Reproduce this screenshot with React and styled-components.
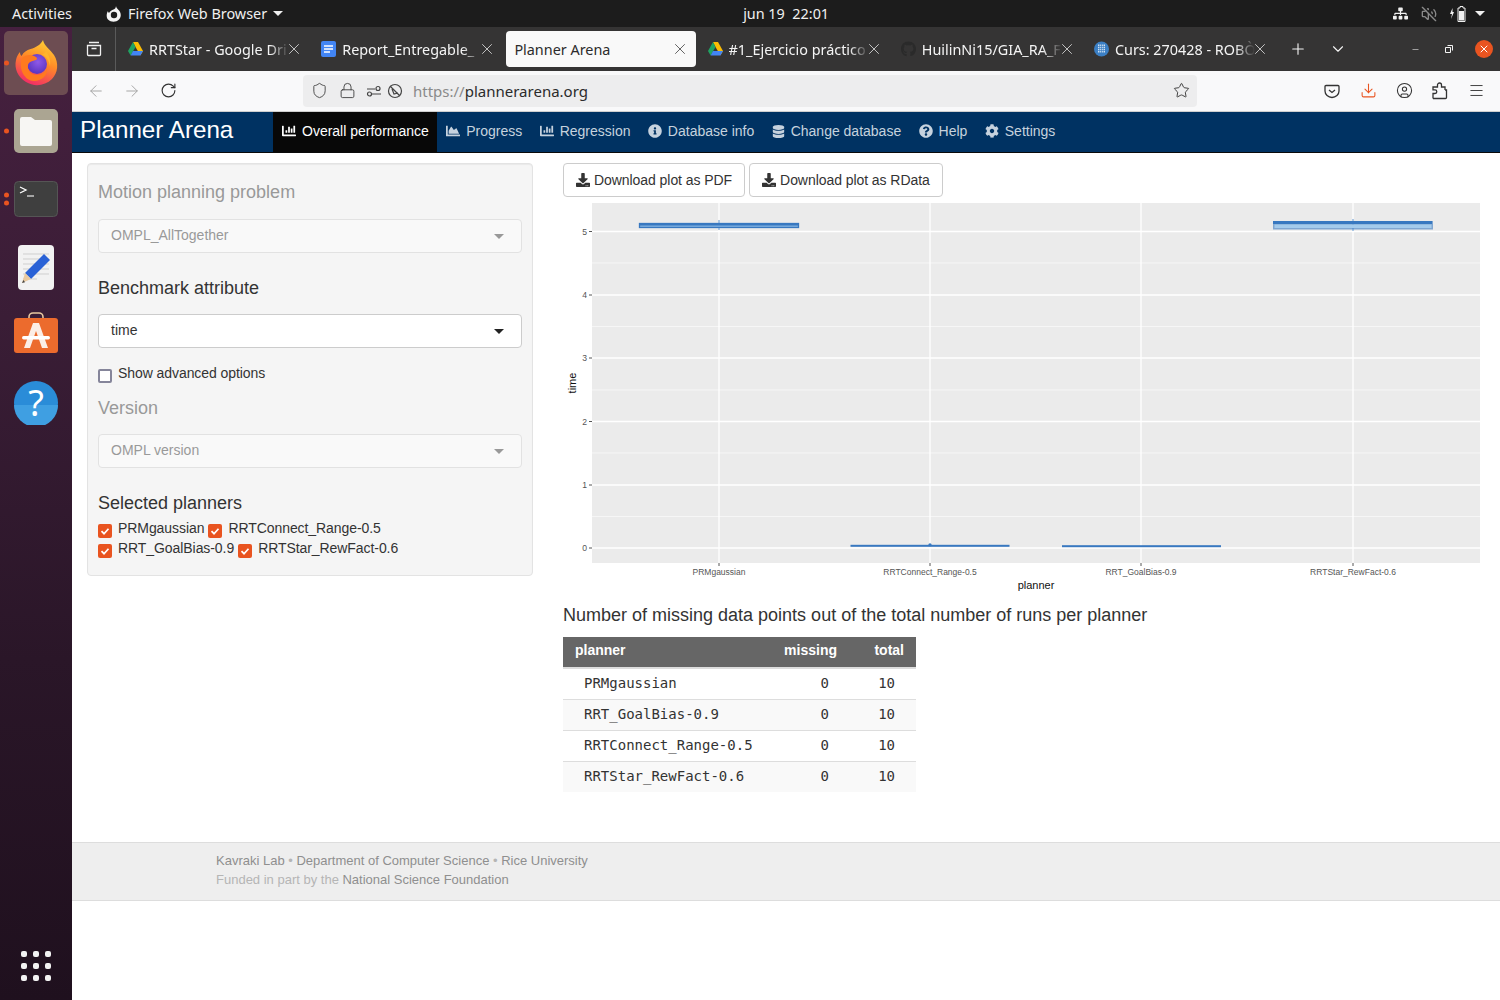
import styled, { createGlobalStyle } from "styled-components"
import {
  ArrowLeft, ArrowRight, RotateCw, Shield, Lock, Star, Download, Menu,
  Plus, ChevronDown, X, Minus, CircleUser, VolumeOff,
} from "lucide-react"
import {
  FaChartBar, FaChartArea, FaInfoCircle, FaDatabase, FaQuestionCircle, FaCog,
  FaDownload, FaGithub, FaSitemap,
} from "react-icons/fa"

const GlobalStyle = createGlobalStyle`
  html, body { margin: 0; padding: 0; background: #fff; }
  body { font-family: "Liberation Sans", Arial, sans-serif; font-size: 14px; color: #333; }
  * { box-sizing: border-box; }
`

const Screen = styled.div`
  width: 1500px;
  height: 1000px;
  display: flex;
  flex-direction: column;
  overflow: hidden;
`

const TopBar = styled.div`
  height: 27px;
  flex: none;
  display: flex;
  align-items: center;
  background: #1c1c1c;
  color: #f0f0f0;
  font-family: "Noto Sans", sans-serif;
  font-size: 14.4px;
  padding-left: 12px;
`

const AppMenu = styled.div`
  display: flex;
  align-items: center;
  margin-left: 34px;
  gap: 6px;
`

const Caret = styled.span`
  width: 0;
  height: 0;
  margin-top: ${(p) => p.$top || 0}px;
  border-left: 5px solid transparent;
  border-right: 5px solid transparent;
  border-top: 5px solid ${(p) => p.$color || "#f0f0f0"};
`

const Clock = styled.div`
  margin-left: 460px;
  white-space: pre;
`

const Tray = styled.div`
  margin-left: auto;
  display: flex;
  align-items: center;
  padding-right: 15px;
`

const TraySlot = styled.span`
  display: flex;
  margin-right: ${(p) => p.$gap}px;
`

const Body = styled.div`
  flex: 1;
  display: flex;
  min-height: 0;
`

const Dock = styled.div`
  width: 72px;
  flex: none;
  display: flex;
  flex-direction: column;
  align-items: center;
  padding: 2px 0 19px;
  background: linear-gradient(180deg, #46203f 0%, #3a1d36 30%, #2a1628 65%, #1f101e 100%);
`

const DockSlot = styled.div`
  position: relative;
  width: 72px;
  height: 68px;
  display: flex;
  align-items: center;
  justify-content: center;
`

const DockTile = styled.div`
  width: 64px;
  height: 64px;
  border-radius: 5px;
  display: flex;
  align-items: center;
  justify-content: center;
  background: ${(p) => (p.$active ? "#6d4d52" : "transparent")};
`

const RunDots = styled.div`
  position: absolute;
  left: 4px;
  top: 50%;
  transform: translateY(-50%);
  display: flex;
  flex-direction: column;
  gap: 3px;
`

const RunDot = styled.span`
  width: 5px;
  height: 5px;
  border-radius: 50%;
  background: #e95420;
`

const AppGrid = styled.div`
  margin-top: auto;
  display: grid;
  grid-template-columns: repeat(3, 6px);
  gap: 6px;
`

const AppDot = styled.span`
  width: 6px;
  height: 6px;
  border-radius: 2px;
  background: #f2f2f2;
`

const Browser = styled.div`
  flex: 1;
  min-width: 0;
  display: flex;
  flex-direction: column;
`

const TabBar = styled.div`
  height: 44px;
  flex: none;
  display: flex;
  align-items: center;
  background: #353434;
  color: #f4f4f4;
  font-family: "Noto Sans", sans-serif;
  font-size: 14.4px;
`

const TabListButton = styled.div`
  width: 44px;
  height: 44px;
  flex: none;
  display: flex;
  align-items: center;
  justify-content: center;
  border-right: 1px solid #5a5a5a;
  margin-right: 4px;
`

const Tab = styled.div`
  width: 190px;
  height: 36px;
  flex: none;
  margin-right: 3.2px;
  padding: 0 7px 0 8px;
  display: flex;
  align-items: center;
  gap: 6px;
  border-radius: 4px;
  background: ${(p) => (p.$active ? "#f9f9f9" : "transparent")};
  color: ${(p) => (p.$active ? "#2b2b2b" : "#f4f4f4")};
`

const TabTitle = styled.span`
  flex: 1;
  min-width: 0;
  white-space: nowrap;
  -webkit-mask-image: ${(p) =>
    p.$active ? "none" : "linear-gradient(90deg, #000 86%, transparent 100%)"};
`

const TabClose = styled.span`
  display: flex;
  flex: none;
  margin-left: -10px;
`

const TabIcon = styled.span`
  width: 15px;
  height: 16px;
  flex: none;
  display: flex;
  align-items: center;
  justify-content: center;
`

const TabStrip = styled.div`
  display: flex;
  align-items: center;
  width: 1158px;
  flex: none;
`

const WindowActions = styled.div`
  display: flex;
  align-items: center;
  flex: 1;
`

const BarIcon = styled.span`
  display: flex;
  align-items: center;
  justify-content: center;
  width: ${(p) => p.$w || 36}px;
  margin-left: ${(p) => p.$left || 0}px;
  flex: none;
`

const CloseDot = styled.span`
  width: 18px;
  height: 18px;
  border-radius: 50%;
  background: #e95420;
  display: flex;
  align-items: center;
  justify-content: center;
`

const Toolbar = styled.div`
  height: 41px;
  flex: none;
  display: flex;
  align-items: center;
  padding: 0 6px 1px;
  background: #f9f9fa;
  border-bottom: 1px solid #cfcfcf;
`

const UrlBar = styled.div`
  width: 894px;
  height: 32px;
  margin-left: 117px;
  display: flex;
  align-items: center;
  padding: 0 7px;
  border-radius: 4px;
  background: #ededee;
  font-family: "Noto Sans", sans-serif;
  font-size: 15px;
  color: #2b2b2b;
`

const UrlGrey = styled.span`
  color: #8a8a8a;
`

const UrlText = styled.span`
  margin-left: 9px;
  flex: 1;
`

const ToolbarRight = styled.div`
  margin-left: auto;
  display: flex;
  align-items: center;
`

const Navbar = styled.div`
  height: 41px;
  flex: none;
  display: flex;
  background: #003262;
  border-bottom: 1px solid #0a0a0a;
`

const Brand = styled.div`
  width: 201px;
  flex: none;
  padding-left: 8px;
  color: #fff;
  font-size: 24.2px;
  line-height: 36px;
`

const NavItem = styled.div`
  display: flex;
  align-items: center;
  gap: 6px;
  padding: 0 8.4px 2px 9px;
  color: ${(p) => (p.$active ? "#fff" : "#c6d2de")};
  background: ${(p) => (p.$active ? "#080808" : "transparent")};
`

const Page = styled.div`
  flex: 1;
  min-height: 0;
  background: #fff;
  display: flex;
  flex-direction: column;
`

const Columns = styled.div`
  display: flex;
  align-items: flex-start;
  gap: 30px;
  padding: 10px 0 0 15px;
`

const Panel = styled.div`
  width: 446px;
  flex: none;
  padding: 18px 10px 17px;
  background: #f5f5f5;
  border: 1px solid #e3e3e3;
  border-radius: 4px;
  box-shadow: inset 0 1px 1px rgba(0, 0, 0, 0.05);
`

const FieldTitle = styled.div`
  font-size: 18px;
  line-height: 20px;
  margin-top: ${(p) => p.$top || 0}px;
  color: ${(p) => (p.$disabled ? "#999" : "#333")};
`

const SelectBox = styled.div`
  height: 34px;
  margin-top: ${(p) => p.$top || 16}px;
  padding: 0 17px 2px 12px;
  display: flex;
  align-items: center;
  justify-content: space-between;
  border: 1px solid ${(p) => (p.$disabled ? "#e2e2e2" : "#ccc")};
  border-radius: 4px;
  background: ${(p) => (p.$disabled ? "#f9f9f9" : "#fff")};
  color: ${(p) => (p.$disabled ? "#999" : "#333")};
`

const CheckRow = styled.div`
  display: flex;
  gap: 4px;
  height: 20px;
  letter-spacing: -0.07px;
  margin-top: ${(p) => p.$top || 0}px;
`

const CheckLabel = styled.label`
  display: flex;
  align-items: flex-start;
  gap: 6px;
  line-height: 20px;
`

const CheckBox = styled.span`
  width: 14px;
  height: 14px;
  margin-top: 6px;
  flex: none;
  display: flex;
  align-items: center;
  justify-content: center;
  border-radius: 2px;
  background: ${(p) => (p.$checked ? "#e95420" : "#fff")};
  border: ${(p) => (p.$checked ? "none" : "2px solid #85859a")};
`

const Results = styled.div`
  flex: 1;
  min-width: 0;
`

const ButtonRow = styled.div`
  display: flex;
  gap: 4px;
`

const PlotButton = styled.div`
  height: 34px;
  padding: 0 12px;
  display: flex;
  align-items: center;
  gap: 4px;
  letter-spacing: -0.06px;
  border: 1px solid #ccc;
  border-radius: 4px;
  background: #fff;
`

const Plot = styled.svg`
  display: block;
  width: 937px;
  height: 392px;
  margin-top: 6px;
`

const TableTitle = styled.div`
  font-size: 18px;
  line-height: 20px;
  margin-top: 10px;
`

const MissingTable = styled.table`
  width: 353px;
  margin-top: 12px;
  border-collapse: collapse;
  table-layout: fixed;
`

const HeadCell = styled.th`
  height: 31px;
  padding: 0 12px 5px;
  background: #666;
  color: #fff;
  font-weight: bold;
  font-size: 14px;
  text-align: ${(p) => (p.$right ? "right" : "left")};
  border-bottom: 2px solid #ddd;
`

const BodyRow = styled.tr`
  background: ${(p) => (p.$odd ? "#f9f9f9" : "#fff")};
  border-top: ${(p) => (p.$first ? "none" : "1px solid #ddd")};
`

const BodyCell = styled.td`
  height: 31px;
  padding: 0 ${(p) => p.$right || 0}px 1px ${(p) => (p.$right ? 0 : 21)}px;
  font-family: "DejaVu Sans Mono", "Liberation Mono", monospace;
  font-size: 14px;
  color: #333;
  text-align: ${(p) => (p.$right ? "right" : "left")};
`

const Footer = styled.div`
  margin-top: 50px;
  height: 59px;
  padding: 8px 0 0 144px;
  background: #eee;
  border-top: 1px solid #ddd;
  border-bottom: 1px solid #ddd;
  font-size: 13px;
  line-height: 19px;
  color: #b5b5b5;
`

const FooterLink = styled.span`
  color: #8f8f8f;
`

const FooterDim = styled.span`
  color: #b5b5b5;
`

const RaisedSvg = styled.svg`
  margin-bottom: 5px;
`

const DriveIcon = () => (
  <svg width="15" height="14" viewBox="0 0 15 14">
    <polygon points="5,0 10,0 15,9 12.4,13.500 7.500,5" fill="#fbbc04" />
    <polygon points="5,0 7.500,5 2.600,13.500 0,9" fill="#1fa463" />
    <polygon points="5,9 15,9 12.400,13.500 2.600,13.500" fill="#4285f4" />
  </svg>
)

const DocsIcon = () => (
  <svg width="15" height="16" viewBox="0 0 15 16">
    <rect width="15" height="16" rx="2" fill="#4285f4" />
    <path d="M3 5h9M3 8h9M3 11h6" stroke="#fff" strokeWidth="1.500" />
  </svg>
)

const UpcIcon = () => (
  <svg width="15" height="16" viewBox="0 0 15 16">
    <circle cx="7.500" cy="8" r="7.500" fill="#3b7fc4" />
    <path d="M4 3.500h7v8H4z" fill="#cfe0f2" />
    <path d="M5.700 3v9M7.500 3v9M9.300 3v9M3.500 5.500h8M3.500 7.500h8M3.500 9.500h8" stroke="#3b7fc4" strokeWidth=".7" />
  </svg>
)

const FirefoxLogo = () => (
  <svg width="48" height="48" viewBox="0 0 48 48">
    <defs>
      <linearGradient id="fxOuter" x1="0.7" y1="0" x2="0.3" y2="1">
        <stop offset="0" stopColor="#ffd035" />
        <stop offset="0.45" stopColor="#ff8a27" />
        <stop offset="1" stopColor="#f0286a" />
      </linearGradient>
      <radialGradient id="fxBall" cx="0.55" cy="0.4" r="0.6">
        <stop offset="0" stopColor="#8f59e8" />
        <stop offset="1" stopColor="#5a35c0" />
      </radialGradient>
    </defs>
    <path d="M31 1c1 6 7 9 11 15 5 8 4 18-2 24-7 7-18 8-26 3C6 38 2 30 4 21c.6-3 2-6 4-8 0 2 .6 3 1.600 4 2-4 5-6 9-7 5-1.400 10-4 12.400-9z" fill="url(#fxOuter)" />
    <circle cx="25" cy="25" r="10" fill="url(#fxBall)" />
    <path d="M10 19c3-3 8-4 12-2 3 1 4 3 2 4-3 1-7 1-8 5-1 5 3 10 9 10 5 0 9-3 10-7 1 8-6 13-13 13C13 42 6 30 10 19z" fill="#ff7a1f" />
    <path d="M34 12c3 4 5 9 4 15-1-5-3-9-8-12 2 0 3-1 4-3z" fill="#ffb52e" />
  </svg>
)

const FirefoxMono = () => (
  <svg width="16" height="16" viewBox="0 0 16 16">
    <path d="M10 0c0 2 2 3 3.500 5 2 3 1.500 6-.5 8.500-3 3-8 3-11 0C0 11 .5 7 2 5c0 1 .5 1.500 1 2 1-2 3-3 4.500-3.500C9 3 10 1.500 10 0z" fill="#f4f4f4" />
    <circle cx="8" cy="9" r="3.200" fill="#1c1c1c" />
  </svg>
)

const BatteryIcon = () => (
  <svg width="18" height="16" viewBox="0 0 18 16">
    <path d="M3.500 2L1 8h2l-1 5 3-7H3.500z" fill="#f0f0f0" />
    <path d="M11 .5h3v1.500h2v13.500H9V2h2z" fill="none" stroke="#f0f0f0" />
    <rect x="10" y="5" width="5" height="9.500" fill="#f0f0f0" />
  </svg>
)

const FilesIcon = () => (
  <svg width="44" height="44" viewBox="0 0 44 44">
    <rect width="44" height="44" rx="5" fill="#aba592" />
    <path d="M6 10a2 2 0 0 1 2-2h9l4 3h15a2 2 0 0 1 2 2v22a2 2 0 0 1-2 2H8a2 2 0 0 1-2-2z" fill="#f7f6f3" />
  </svg>
)

const TerminalIcon = () => (
  <svg width="44" height="36" viewBox="0 0 44 36">
    <rect x=".5" y=".5" width="43" height="35" rx="4" fill="#3f3f3f" stroke="#555" />
    <path d="M6 6l6 3-6 3" fill="none" stroke="#fff" strokeWidth="1.300" />
    <path d="M13 15h7" stroke="#ddd" strokeWidth="1.300" />
  </svg>
)

const EditorIcon = () => (
  <svg width="36" height="45" viewBox="0 0 36 45">
    <rect width="36" height="45" rx="4" fill="#f2f2f2" />
    <path d="M5 9h26M5 14h26M5 19h26M5 24h26M5 29h26M5 34h14" stroke="#cfcfcf" />
    <polygon points="26,9 32,15 13,34 7,28" fill="#2a62d6" />
    <polygon points="7,28 13,34 4,38" fill="#e8c9a0" />
    <polygon points="5.500,35 7,37.300 4,38" fill="#444" />
  </svg>
)

const SoftwareIcon = () => (
  <RaisedSvg width="44" height="41" viewBox="0 0 44 41">
    <path d="M15 7V5a4 4 0 0 1 4-4h6a4 4 0 0 1 4 4v2" fill="none" stroke="#e9c8a0" strokeWidth="1.600" />
    <rect y="6" width="44" height="35" rx="3" fill="#ec6b2d" />
    <path d="M19 11h6l9 25h-6l-6-17-6 17h-6z" fill="#fbeee6" />
    <rect x="8" y="24" width="28" height="3.500" rx="1.700" fill="#fff" />
  </RaisedSvg>
)

const HelpIcon = () => (
  <svg width="44" height="44" viewBox="0 0 44 44">
    <circle cx="22" cy="22" r="22" fill="#2a8cd8" />
    <path d="M0 24a22 22 0 0 0 44 0z" fill="#3f9fe2" />
    <text x="22" y="35" textAnchor="middle" fontFamily="Noto Sans, sans-serif" fontSize="36" fill="#fff">?</text>
  </svg>
)

const PermissionIcons = () => (
  <svg width="38" height="16" viewBox="0 0 38 16">
    <g fill="none" stroke="#444" strokeWidth="1.200">
      <path d="M1 6h8M6 11h9" />
      <circle cx="12" cy="5.500" r="2" />
      <circle cx="3.500" cy="11" r="2" />
      <circle cx="29" cy="8" r="6.500" />
      <path d="M24 3l10 10M26 6l2 5 4-1" />
    </g>
  </svg>
)

const PocketIcon = () => (
  <svg width="16" height="16" viewBox="0 0 16 16" fill="none" stroke="#333" strokeWidth="1.300">
    <path d="M2 2.500h12a1 1 0 0 1 1 1V8a7 6.500 0 0 1-14 0V3.500a1 1 0 0 1 1-1z" />
    <path d="M5 7l3 2.500L11 7" />
  </svg>
)

const PuzzleIcon = () => (
  <svg width="16" height="18" viewBox="0 0 16 18" fill="none" stroke="#333" strokeWidth="1.300">
    <path d="M1 16.500V11.500h2a1.800 1.800 0 0 0 0-3.600H1V5h4.500V3a2 2 0 0 1 4 0v2H13v3" />
    <path d="M1 16.500h12.500a1 1 0 0 0 1-1V8H13" />
  </svg>
)

const tabs = [
  { title: "RRTStar - Google Dri", icon: <DriveIcon /> },
  { title: "Report_Entregable_", icon: <DocsIcon /> },
  { title: "Planner Arena", active: true },
  { title: "#1_Ejercicio práctico", icon: <DriveIcon /> },
  { title: "HuilinNi15/GIA_RA_F", icon: <FaGithub size={16} color="#2a2a2a" /> },
  { title: "Curs: 270428 - ROBÒ", icon: <UpcIcon /> },
]

const navItems = [
  { label: "Overall performance", icon: <FaChartBar size={14} />, active: true },
  { label: "Progress", icon: <FaChartArea size={14} /> },
  { label: "Regression", icon: <FaChartBar size={14} /> },
  { label: "Database info", icon: <FaInfoCircle size={14} /> },
  { label: "Change database", icon: <FaDatabase size={13} /> },
  { label: "Help", icon: <FaQuestionCircle size={14} /> },
  { label: "Settings", icon: <FaCog size={14} /> },
]

const rows = [
  ["PRMgaussian", 0, 10],
  ["RRT_GoalBias-0.9", 0, 10],
  ["RRTConnect_Range-0.5", 0, 10],
  ["RRTStar_RewFact-0.6", 0, 10],
]

const yMajor = [
  { label: "0", y: 548 },
  { label: "1", y: 485 },
  { label: "2", y: 421.5 },
  { label: "3", y: 358 },
  { label: "4", y: 295 },
  { label: "5", y: 231.5 },
]
const yMinor = [516.5, 453, 390, 326.5, 263]
const xMajor = [
  { label: "PRMgaussian", x: 719 },
  { label: "RRTConnect_Range-0.5", x: 930 },
  { label: "RRT_GoalBias-0.9", x: 1141 },
  { label: "RRTStar_RewFact-0.6", x: 1353 },
]

const BoxPlot = () => (
  <Plot viewBox="563 203 937 392">
    <rect x="592" y="203" width="888" height="360" fill="#ebebeb" />
    {yMinor.map((y) => (
      <line key={y} x1="592" x2="1480" y1={y} y2={y} stroke="#f6f6f6" strokeWidth="1" />
    ))}
    {yMajor.map((t) => (
      <g key={t.label}>
        <line x1="592" x2="1480" y1={t.y} y2={t.y} stroke="#fff" strokeWidth="1.300" />
        <line x1="589" x2="592" y1={t.y} y2={t.y} stroke="#555" />
        <text x="587" y={t.y + 3} textAnchor="end" fontSize="8.600" fill="#555">{t.label}</text>
      </g>
    ))}
    {xMajor.map((t) => (
      <g key={t.label}>
        <line x1={t.x} x2={t.x} y1="203" y2="563" stroke="#fff" strokeWidth="1.300" />
        <line x1={t.x} x2={t.x} y1="563" y2="566" stroke="#555" />
        <text x={t.x} y="575" textAnchor="middle" fontSize="8.500" fill="#555">{t.label}</text>
      </g>
    ))}
    <text x="1036" y="589" textAnchor="middle" fontSize="11" fill="#111">planner</text>
    <text transform="translate(576 383) rotate(-90)" textAnchor="middle" fontSize="11" fill="#111">time</text>

    <line x1="719" x2="719" y1="220" y2="230" stroke="#5c94d0" strokeWidth="1" />
    <rect x="639.500" y="223.500" width="159" height="4" fill="#7fb0e0" stroke="#3878c0" strokeWidth="1.300" />
    <line x1="639" x2="799" y1="224.500" y2="224.500" stroke="#3878c0" strokeWidth="2" />

    <rect x="850.500" y="544.800" width="159" height="2" fill="#3878c0" />
    <circle cx="930" cy="544.800" r="1.600" fill="#3878c0" />

    <rect x="1062" y="545.200" width="159" height="2" fill="#3878c0" />

    <line x1="1353" x2="1353" y1="219" y2="231" stroke="#5c94d0" strokeWidth="1" />
    <rect x="1273" y="221" width="160" height="8.500" fill="#3878c0" fillOpacity="0.6" />
    <rect x="1274.500" y="224.500" width="157" height="3.500" fill="#a4cbec" />
    <line x1="1273" x2="1432" y1="222.500" y2="222.500" stroke="#3878c0" strokeWidth="3" />
  </Plot>
)

const Check = () => (
  <svg width="10" height="10" viewBox="0 0 10 10">
    <path d="M1.500 5.200l2.500 2.500 4.500-5" fill="none" stroke="#fff" strokeWidth="1.700" />
  </svg>
)

const Planner = ({ name, checked = true }) => (
  <CheckLabel>
    <CheckBox $checked={checked}>{checked && <Check />}</CheckBox>
    {name}
  </CheckLabel>
)

const App = () => {
  return (
    <Screen>
      <GlobalStyle />
      <TopBar>
        <span>Activities</span>
        <AppMenu>
          <FirefoxMono />
          <span>Firefox Web Browser</span>
          <Caret />
        </AppMenu>
        <Clock>jun 19  22:01</Clock>
        <Tray>
          <TraySlot $gap={13}><FaSitemap size={15} color="#f0f0f0" /></TraySlot>
          <TraySlot $gap={12}><VolumeOff size={16} color="#8a8a8a" /></TraySlot>
          <TraySlot $gap={8}><BatteryIcon /></TraySlot>
          <Caret />
        </Tray>
      </TopBar>

      <Body>
        <Dock>
          <DockSlot>
            <RunDots><RunDot /></RunDots>
            <DockTile $active><FirefoxLogo /></DockTile>
          </DockSlot>
          <DockSlot>
            <RunDots><RunDot /></RunDots>
            <FilesIcon />
          </DockSlot>
          <DockSlot>
            <RunDots><RunDot /><RunDot /></RunDots>
            <TerminalIcon />
          </DockSlot>
          <DockSlot><EditorIcon /></DockSlot>
          <DockSlot><SoftwareIcon /></DockSlot>
          <DockSlot><HelpIcon /></DockSlot>
          <AppGrid>
            {Array.from({ length: 9 }).map((_, i) => <AppDot key={i} />)}
          </AppGrid>
        </Dock>

        <Browser>
          <TabBar>
            <TabListButton>
              <svg width="16" height="16" viewBox="0 0 16 16" fill="none" stroke="#f0f0f0" strokeWidth="1.300">
                <path d="M3 1.500h10M1.500 4.500h13v9a1 1 0 0 1-1 1h-11a1 1 0 0 1-1-1zM5.500 7.500h5" />
              </svg>
            </TabListButton>
            <TabStrip>
              {tabs.map((tab) => (
                <Tab key={tab.title} $active={tab.active}>
                  {tab.icon && <TabIcon>{tab.icon}</TabIcon>}
                  <TabTitle $active={tab.active}>{tab.title}</TabTitle>
                  <TabClose>
                    <X size={18} strokeWidth={1} color={tab.active ? "#333" : "#f0f0f0"} />
                  </TabClose>
                </Tab>
              ))}
            </TabStrip>
            <WindowActions>
              <BarIcon $w={40}><Plus size={18} strokeWidth={1.5} color="#f4f4f4" /></BarIcon>
              <BarIcon $w={40}><ChevronDown size={18} strokeWidth={1.5} color="#f4f4f4" /></BarIcon>
              <BarIcon $w={37} $left={39}><Minus size={9} strokeWidth={1.5} color="#f4f4f4" /></BarIcon>
              <BarIcon $w={30}>
                <svg width="8" height="8" viewBox="0 0 8 8" fill="none" stroke="#f4f4f4">
                  <path d="M2.500.500h5v5M.500 2.500h5v5h-5z" />
                </svg>
              </BarIcon>
              <BarIcon $w={40}>
                <CloseDot><X size={12} strokeWidth={2} color="#fff" /></CloseDot>
              </BarIcon>
            </WindowActions>
          </TabBar>

          <Toolbar>
            <BarIcon><ArrowLeft size={18} strokeWidth={1.3} color="#a5a5a5" /></BarIcon>
            <BarIcon><ArrowRight size={18} strokeWidth={1.3} color="#a5a5a5" /></BarIcon>
            <BarIcon><RotateCw size={17} strokeWidth={1.6} color="#333" /></BarIcon>
            <UrlBar>
              <BarIcon $w={18}><Shield size={17} strokeWidth={1.3} color="#444" /></BarIcon>
              <BarIcon $w={38}><Lock size={17} strokeWidth={1.3} color="#444" /></BarIcon>
              <PermissionIcons />
              <UrlText><UrlGrey>https://</UrlGrey>plannerarena.org</UrlText>
              <BarIcon $w={18}><Star size={17} strokeWidth={1.3} color="#333" /></BarIcon>
            </UrlBar>
            <ToolbarRight>
              <BarIcon><PocketIcon /></BarIcon>
              <BarIcon><Download size={17} strokeWidth={1.5} color="#e95420" /></BarIcon>
              <BarIcon><CircleUser size={17} strokeWidth={1.5} color="#333" /></BarIcon>
              <BarIcon><PuzzleIcon /></BarIcon>
              <BarIcon><Menu size={17} strokeWidth={1.3} color="#333" /></BarIcon>
            </ToolbarRight>
          </Toolbar>

          <Navbar>
            <Brand>Planner Arena</Brand>
            {navItems.map((item) => (
              <NavItem key={item.label} $active={item.active}>
                {item.icon}
                {item.label}
              </NavItem>
            ))}
          </Navbar>

          <Page>
            <Columns>
              <Panel>
                <FieldTitle $disabled>Motion planning problem</FieldTitle>
                <SelectBox $disabled $top={17}>
                  OMPL_AllTogether
                  <Caret $color="#999" $top={2} />
                </SelectBox>
                <FieldTitle $top={25}>Benchmark attribute</FieldTitle>
                <SelectBox>
                  time
                  <Caret $color="#222" $top={2} />
                </SelectBox>
                <CheckRow $top={15}>
                  <Planner name="Show advanced options" checked={false} />
                </CheckRow>
                <FieldTitle $disabled $top={15}>Version</FieldTitle>
                <SelectBox $disabled>
                  OMPL version
                  <Caret $color="#999" $top={2} />
                </SelectBox>
                <FieldTitle $top={25}>Selected planners</FieldTitle>
                <CheckRow $top={5}>
                  <Planner name="PRMgaussian" />
                  <Planner name="RRTConnect_Range-0.5" />
                </CheckRow>
                <CheckRow>
                  <Planner name="RRT_GoalBias-0.9" />
                  <Planner name="RRTStar_RewFact-0.6" />
                </CheckRow>
              </Panel>

              <Results>
                <ButtonRow>
                  <PlotButton><FaDownload size={14} />Download plot as PDF</PlotButton>
                  <PlotButton><FaDownload size={14} />Download plot as RData</PlotButton>
                </ButtonRow>
                <BoxPlot />
                <TableTitle>Number of missing data points out of the total number of runs per planner</TableTitle>
                <MissingTable>
                  <colgroup>
                    <col width="207" />
                    <col width="79" />
                    <col width="67" />
                  </colgroup>
                  <thead>
                    <tr>
                      <HeadCell>planner</HeadCell>
                      <HeadCell $right>missing</HeadCell>
                      <HeadCell $right>total</HeadCell>
                    </tr>
                  </thead>
                  <tbody>
                    {rows.map((row, index) => (
                      <BodyRow key={row[0]} $odd={index % 2 === 1} $first={index === 0}>
                        <BodyCell>{row[0]}</BodyCell>
                        <BodyCell $right={20}>{row[1]}</BodyCell>
                        <BodyCell $right={21}>{row[2]}</BodyCell>
                      </BodyRow>
                    ))}
                  </tbody>
                </MissingTable>
              </Results>
            </Columns>

            <Footer>
              <div>
                <FooterLink>Kavraki Lab</FooterLink>
                <FooterDim> • </FooterDim>
                <FooterLink>Department of Computer Science</FooterLink>
                <FooterDim> • </FooterDim>
                <FooterLink>Rice University</FooterLink>
              </div>
              <div>
                Funded in part by the <FooterLink>National Science Foundation</FooterLink>
              </div>
            </Footer>
          </Page>
        </Browser>
      </Body>
    </Screen>
  )
}

export default App
